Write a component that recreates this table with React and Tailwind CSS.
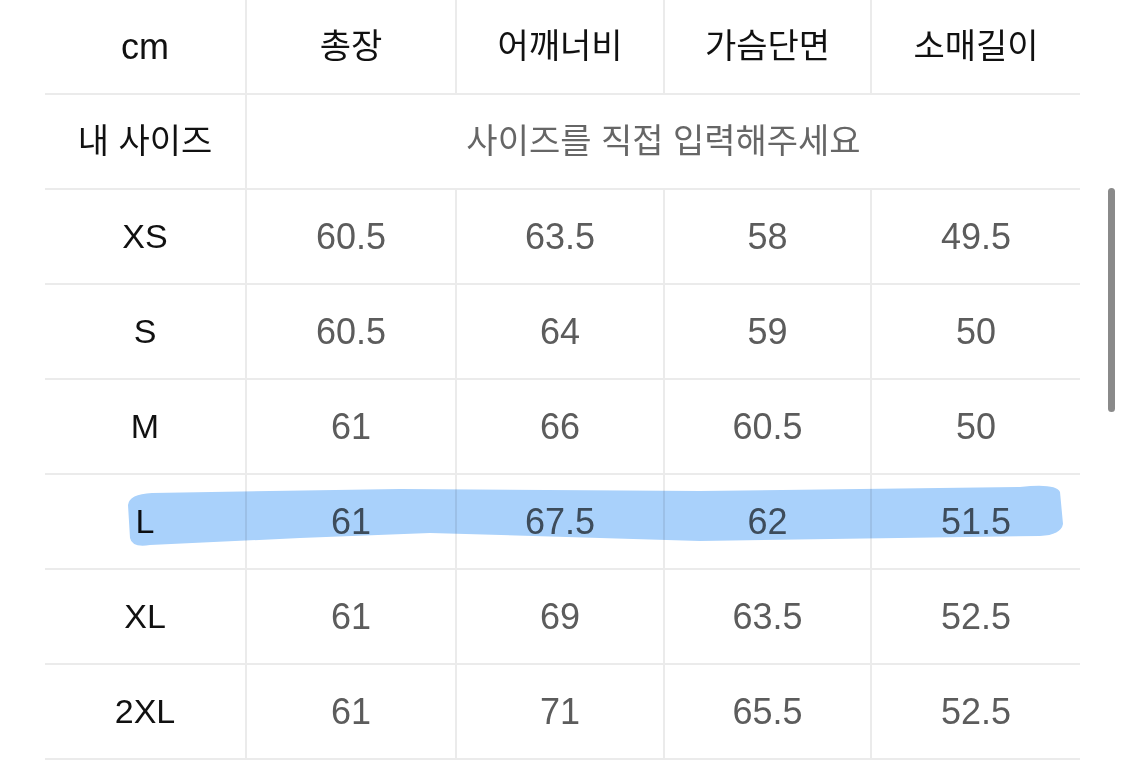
import React from 'react';

const sizes = [
  { size: 'XS', values: ['60.5', '63.5', '58', '49.5'] },
  { size: 'S', values: ['60.5', '64', '59', '50'] },
  { size: 'M', values: ['61', '66', '60.5', '50'] },
  { size: 'L', values: ['61', '67.5', '62', '51.5'] },
  { size: 'XL', values: ['61', '69', '63.5', '52.5'] },
  { size: '2XL', values: ['61', '71', '65.5', '52.5'] },
];

const headers = ['총장', '어깨너비', '가슴단면', '소매길이'];

const font = { fontFamily: '"Liberation Sans", "Noto Sans CJK KR", sans-serif' };

function Cell({ children, last, className = '' }) {
  return (
    <div
      className={
        'h-[95px] flex items-center justify-center border-b-2 border-[#ebebeb] ' +
        (last ? '' : 'border-r-2 ') +
        className
      }
    >
      {children}
    </div>
  );
}

function App() {
  return (
    <div className="relative w-[1125px] h-[781px] bg-white overflow-hidden" style={font}>
      <div className="ml-[45px] w-[1035px] grid grid-cols-[202px_210px_208px_207px_208px]">
        <Cell className="text-[36px] text-[#111]">cm</Cell>
        {headers.map((h, i) => (
          <Cell key={h} last={i === 3} className="text-[34px] text-[#111]">
            {h}
          </Cell>
        ))}

        <Cell className="text-[34px] text-[#111]">내 사이즈</Cell>
        <Cell last className="col-span-4 text-[34px] text-[#666]">
          사이즈를 직접 입력해주세요
        </Cell>

        {sizes.map((row) => (
          <React.Fragment key={row.size}>
            <Cell className="text-[34px] text-[#111]">{row.size}</Cell>
            {row.values.map((v, i) => (
              <Cell key={i} last={i === 3} className="text-[36px] text-[#5c5c5c]">
                {v}
              </Cell>
            ))}
          </React.Fragment>
        ))}
      </div>

      {/* marker highlight over the L row */}
      <svg
        className="absolute left-0 top-0 pointer-events-none mix-blend-multiply"
        width="1125"
        height="781"
        viewBox="0 0 1125 781"
      >
        <path
          d="M128,505 Q129,494 152,493 L400,489 L700,491 L1020,487 Q1056,483 1060,492 L1063,524 Q1061,535 1040,536 L700,541 L430,533 L300,538 L150,545 Q132,548 130,538 Z"
          fill="#a9d1fb"
        />
      </svg>

      {/* scrollbar */}
      <div className="absolute left-[1108px] top-[188px] w-[7px] h-[224px] rounded-full bg-[#8a8a8a]" />
    </div>
  );
}

export default App;
